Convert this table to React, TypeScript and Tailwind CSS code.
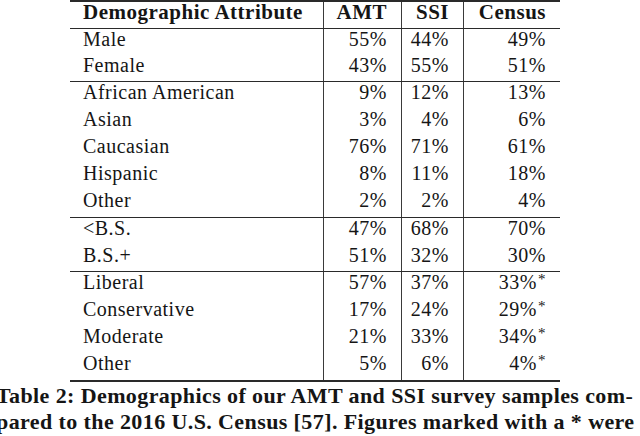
type Row = { label: string; amt: string; ssi: string; census: string; star?: boolean };

const sections: { h: string[]; rows: Row[] }[] = [
  {
    h: ["h-[26px]", "h-[26px]"],
    rows: [
      { label: "Male", amt: "55%", ssi: "44%", census: "49%" },
      { label: "Female", amt: "43%", ssi: "55%", census: "51%" },
    ],
  },
  {
    h: ["h-[27px]", "h-[27px]", "h-[27px]", "h-[27px]", "h-[27px]"],
    rows: [
      { label: "African American", amt: "9%", ssi: "12%", census: "13%" },
      { label: "Asian", amt: "3%", ssi: "4%", census: "6%" },
      { label: "Caucasian", amt: "76%", ssi: "71%", census: "61%" },
      { label: "Hispanic", amt: "8%", ssi: "11%", census: "18%" },
      { label: "Other", amt: "2%", ssi: "2%", census: "4%" },
    ],
  },
  {
    h: ["h-[27px]", "h-[26px]"],
    rows: [
      { label: "<B.S.", amt: "47%", ssi: "68%", census: "70%" },
      { label: "B.S.+", amt: "51%", ssi: "32%", census: "30%" },
    ],
  },
  {
    h: ["h-[27px]", "h-[27px]", "h-[27px]", "h-[27px]"],
    rows: [
      { label: "Liberal", amt: "57%", ssi: "37%", census: "33%", star: true },
      { label: "Conservative", amt: "17%", ssi: "24%", census: "29%", star: true },
      { label: "Moderate", amt: "21%", ssi: "33%", census: "34%", star: true },
      { label: "Other", amt: "5%", ssi: "6%", census: "4%", star: true },
    ],
  },
];

const grid = "grid grid-cols-[253px_78px_62px_97px]";
const num = "border-l border-[#3a3a3a] pr-[14px] text-right";

export default function App() {
  return (
    <div className="w-[640px] h-[436px] overflow-hidden bg-white text-[#151515] [font-family:Liberation_Serif,Times_New_Roman,serif]">
      <div className="ml-[70px] w-[490px] border-t-2 border-b-2 border-[#2a2a2a]">
        <div className={`${grid} h-[27px] border-b border-[#2a2a2a] text-[21px] leading-[21px] font-bold tracking-[0.5px]`}>
          <div className="pl-[13px]">Demographic Attribute</div>
          <div className={num}>AMT</div>
          <div className={num}>SSI</div>
          <div className={num}>Census</div>
        </div>
        {sections.map((sec, si) => (
          <div key={si} className={si > 0 ? "border-t border-[#2a2a2a]" : ""}>
            {sec.rows.map((r, ri) => (
              <div key={ri} className={`${grid} ${sec.h[ri]} text-[20px] leading-[21px] tracking-[0.5px]`}>
                <div className="pl-[13px]">{r.label}</div>
                <div className={num}>{r.amt}</div>
                <div className={num}>{r.ssi}</div>
                <div className={num}>
                  {r.census}
                  {r.star && <span className="align-top text-[15px] leading-[15px] ml-[1px]">*</span>}
                </div>
              </div>
            ))}
          </div>
        ))}
      </div>
      <div className="mt-[1px] -ml-[4px] whitespace-nowrap text-[22px] leading-[26px] font-bold tracking-[0.4px]">
        <div>Table 2: Demographics of our AMT and SSI survey samples com-</div>
        <div>pared to the 2016 U.S. Census [57]. Figures marked with a * were</div>
      </div>
    </div>
  );
}
